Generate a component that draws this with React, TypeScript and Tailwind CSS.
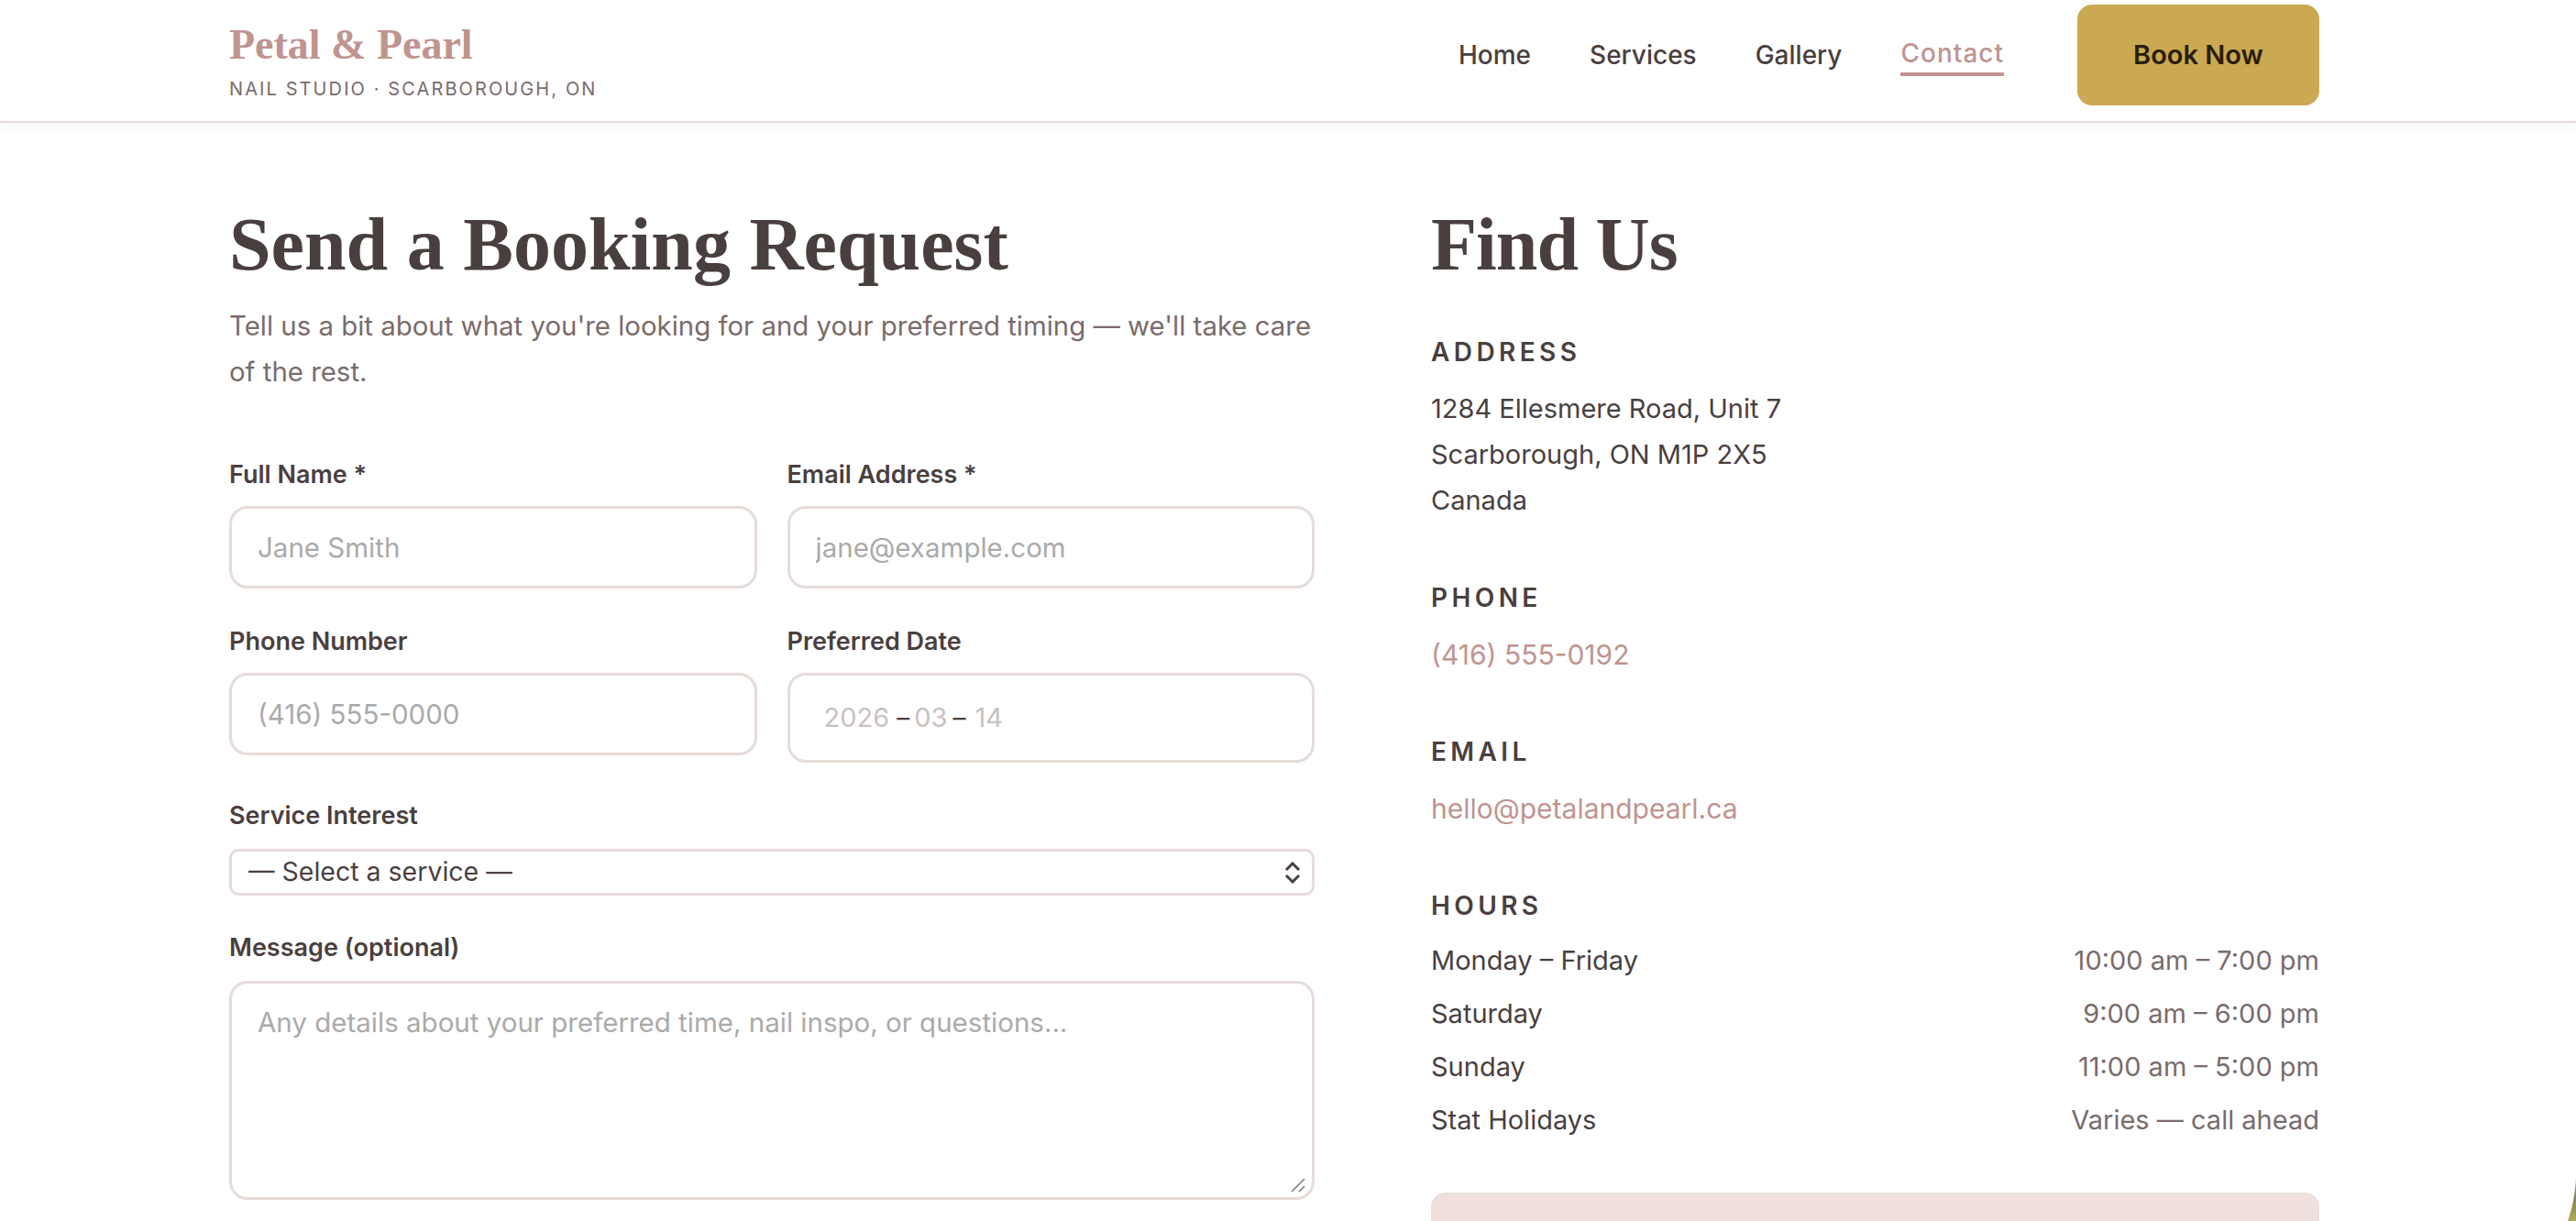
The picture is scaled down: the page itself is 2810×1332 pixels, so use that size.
const sans = "font-['Inter','Noto_Sans',sans-serif]";

function Label({ children, wide }: { children: React.ReactNode; wide?: boolean }) {
  return (
    <label className={`block text-[27px] leading-[40px] font-semibold text-[#4a3f3f] ${wide ? "mb-[16px]" : "mb-[14px]"}`}>
      {children}
    </label>
  );
}

function Input({ placeholder }: { placeholder: string }) {
  return (
    <input
      placeholder={placeholder}
      className="block w-full h-[90px] px-[28px] rounded-[20px] border-[3px] border-[#e6dcd9] bg-white text-[29.5px] outline-none placeholder:text-[#aaaaaa]"
    />
  );
}

function InfoHead({ children, tight }: { children: React.ReactNode; tight?: boolean }) {
  return (
    <h3 className={`text-[28px] leading-[40px] font-semibold tracking-[4.4px] text-[#4a3f3f] ${tight ? "mb-[11px]" : "mb-[17px]"}`}>
      {children}
    </h3>
  );
}

const hours = [
  ["Monday – Friday", "10:00 am – 7:00 pm"],
  ["Saturday", "9:00 am – 6:00 pm"],
  ["Sunday", "11:00 am – 5:00 pm"],
  ["Stat Holidays", "Varies — call ahead"],
];

export default function App() {
  return (
    <div className={`relative h-[1332px] overflow-hidden bg-white pr-[30px] ${sans}`}>
      <header className="-mr-[30px] h-[134px] border-b-[2px] border-[#e9dedb] bg-white pr-[30px] shadow-[0_4px_12px_rgba(74,63,63,0.05)]">
        <div className="mx-auto flex h-[132px] max-w-[2280px] items-center justify-between">
          <div>
            <div className="font-['Liberation_Serif',serif] text-[46px] leading-[56px] font-bold text-[#c09490]">Petal &amp; Pearl</div>
            <div className="mt-[6px] text-[20px] leading-[28px] tracking-[2.1px] text-[#7a6b6b]">NAIL STUDIO · SCARBOROUGH, ON</div>
          </div>
          <nav className="mb-[12px] flex items-center gap-[64px] text-[28px] font-medium text-[#4a3f3f]">
            <a>Home</a>
            <a>Services</a>
            <a>Gallery</a>
            <a className="border-b-[4px] border-[#c09490] tracking-[1px] text-[#c09490]">Contact</a>
            <button className="ml-[16px] h-[110px] w-[264px] rounded-[16px] bg-[#cba952] text-[29px] font-semibold text-[#2a1d08]">Book Now</button>
          </nav>
        </div>
      </header>

      <main className="mx-auto flex max-w-[2280px] justify-between pt-[78px]">
        <section className="w-[1184px]">
          <h1 className="font-['Liberation_Serif',serif] text-[82px] leading-[110px] font-bold text-[#4a3f3f]">Send a Booking Request</h1>
          <p className="mt-[9px] text-[29.4px] leading-[50px] text-[#7a6b6b]">Tell us a bit about what you're looking for and your preferred timing — we'll take care of the rest.</p>
          <div className="mt-[67px] grid grid-cols-2 items-start gap-x-[33px]">
            <div className="mb-[38px]"><Label>Full Name *</Label><Input placeholder="Jane Smith" /></div>
            <div className="mb-[38px]"><Label>Email Address *</Label><Input placeholder="jane@example.com" /></div>
            <div className="mb-[38px]"><Label>Phone Number</Label><Input placeholder="(416) 555-0000" /></div>
            <div className="mb-[38px]">
              <Label>Preferred Date</Label>
              <div className="flex h-[98px] items-center rounded-[20px] border-[3px] border-[#e6dcd9] pl-[37px] text-[29px] text-[#c9c1bf]">
                <span>2026</span>
                <span className="ml-[8px] text-[28px] text-[#4a3f3f]">–</span>
                <span className="ml-[5px]">03</span>
                <span className="ml-[6px] text-[28px] text-[#4a3f3f]">–</span>
                <span className="ml-[10px]">14</span>
              </div>
            </div>
          </div>
          <Label wide>Service Interest</Label>
          <div className="flex h-[51px] items-center justify-between rounded-[10px] border-[3px] border-[#e6dcd9] pl-[18px] pr-[12px] text-[28.5px] text-[#4a3f3f]">
            <span>— Select a service —</span>
            <svg viewBox="0 0 18 24" className="h-[24px] w-[18px]" fill="none" stroke="#4a3f3f" strokeWidth="3"><path d="M2 9l7-7 7 7M2 15l7 7 7-7" /></svg>
          </div>
          <div className="mt-[37px]"><Label wide>Message (optional)</Label></div>
          <div className="relative">
            <textarea
              placeholder="Any details about your preferred time, nail inspo, or questions..."
              className="block h-[239px] w-full resize-none rounded-[20px] border-[3px] border-[#e6dcd9] px-[28px] py-[22px] text-[29.5px] leading-[40px] outline-none placeholder:text-[#aaaaaa]"
            />
            <svg viewBox="0 0 16 16" className="absolute bottom-[8px] right-[10px] h-[16px] w-[16px]" stroke="#777" strokeWidth="1.5"><path d="M1 15L15 1M9 15l6-6" /></svg>
          </div>
        </section>

        <aside className="w-[969px]">
          <h2 className="font-['Liberation_Serif',serif] text-[82px] leading-[110px] font-bold tracking-[-1px] text-[#4a3f3f]">Find Us</h2>
          <div className="mt-[42px]">
            <InfoHead>ADDRESS</InfoHead>
            <p className="text-[29px] leading-[50px] text-[#4a3f3f]">1284 Ellesmere Road, Unit 7<br />Scarborough, ON M1P 2X5<br />Canada</p>
          </div>
          <div className="mt-[61px]">
            <InfoHead>PHONE</InfoHead>
            <a className="block text-[30px] leading-[50px] text-[#c09490]">(416) 555-0192</a>
          </div>
          <div className="mt-[61px]">
            <InfoHead>EMAIL</InfoHead>
            <a className="block text-[30px] leading-[50px] text-[#c09490]">hello@petalandpearl.ca</a>
          </div>
          <div className="mt-[61px]">
            <InfoHead tight>HOURS</InfoHead>
            {hours.map(([d, t]) => (
              <div key={d} className="flex h-[58px] items-center justify-between text-[29px]">
                <span className="text-[#4a3f3f]">{d}</span>
                <span className="text-[#7a6b6b]">{t}</span>
              </div>
            ))}
          </div>
          <div className="mt-[50px] h-[200px] rounded-[16px] border-[2px] border-[#eadeda] bg-[#efe0dd]" />
        </aside>
      </main>

      <svg viewBox="0 0 10 52" className="absolute bottom-0 right-0 h-[52px] w-[10px]">
        <defs>
          <linearGradient id="corner" x1="0" y1="0" x2="0" y2="1">
            <stop offset="0" stopColor="#ffffff" />
            <stop offset="0.25" stopColor="#8c8c84" />
            <stop offset="0.5" stopColor="#7f7f52" />
            <stop offset="1" stopColor="#b0ad60" />
          </linearGradient>
        </defs>
        <path d="M10 0C10 20 6 38 1 52H10Z" fill="url(#corner)" />
      </svg>
    </div>
  );
}
